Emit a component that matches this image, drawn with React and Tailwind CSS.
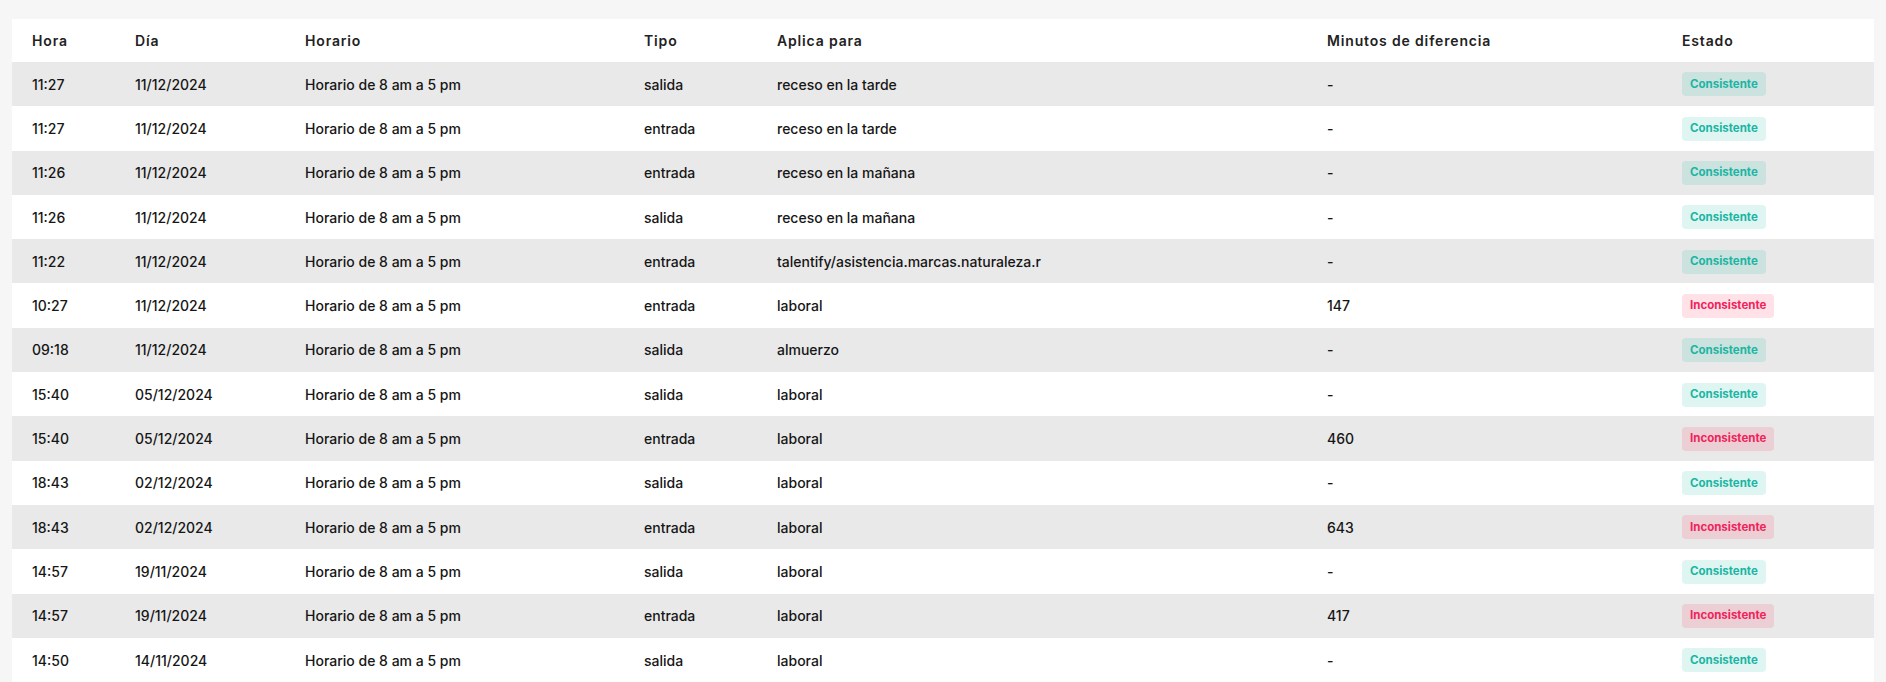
import React from "react";

const rows = [
  ["11:27", "11/12/2024", "salida", "receso en la tarde", "-", true],
  ["11:27", "11/12/2024", "entrada", "receso en la tarde", "-", true],
  ["11:26", "11/12/2024", "entrada", "receso en la mañana", "-", true],
  ["11:26", "11/12/2024", "salida", "receso en la mañana", "-", true],
  ["11:22", "11/12/2024", "entrada", "talentify/asistencia.marcas.naturaleza.r", "-", true],
  ["10:27", "11/12/2024", "entrada", "laboral", "147", false],
  ["09:18", "11/12/2024", "salida", "almuerzo", "-", true],
  ["15:40", "05/12/2024", "salida", "laboral", "-", true],
  ["15:40", "05/12/2024", "entrada", "laboral", "460", false],
  ["18:43", "02/12/2024", "salida", "laboral", "-", true],
  ["18:43", "02/12/2024", "entrada", "laboral", "643", false],
  ["14:57", "19/11/2024", "salida", "laboral", "-", true],
  ["14:57", "19/11/2024", "entrada", "laboral", "417", false],
  ["14:50", "14/11/2024", "salida", "laboral", "-", true],
];

function Estado({ ok }) {
  return ok ? (
    <span className="inline-flex h-[24px] items-center rounded-[4px] bg-[#14b8a6]/[0.14] px-[8px] text-[11.5px] font-bold text-[#1bb5a3]">
      Consistente
    </span>
  ) : (
    <span className="inline-flex h-[24px] items-center rounded-[4px] bg-[#ff2d5a]/[0.14] px-[8px] text-[11.5px] font-bold text-[#f0245a]">
      Inconsistente
    </span>
  );
}

export default function App() {
  return (
    <div
      className="min-h-screen bg-[#f6f6f6] pl-[12px] pr-[12px] pt-[19px]"
      style={{ fontFamily: "Inter, 'Liberation Sans', sans-serif" }}
    >
      <div className="bg-white">
        <table className="w-full table-fixed border-collapse text-left text-[14px] text-[#161616]">
          <colgroup>
            <col className="w-[103px]" />
            <col className="w-[170px]" />
            <col className="w-[339px]" />
            <col className="w-[133px]" />
            <col className="w-[550px]" />
            <col className="w-[355px]" />
            <col />
          </colgroup>
          <thead>
            <tr className="h-[43px]">
              {["Hora", "Día", "Horario", "Tipo", "Aplica para", "Minutos de diferencia", "Estado"].map((h) => (
                <th key={h} className="pl-[20px] font-semibold tracking-[0.06em] text-[#222]">
                  {h}
                </th>
              ))}
            </tr>
          </thead>
          <tbody>
            {rows.map((r, i) => (
              <tr key={i} className={i % 2 === 0 ? "h-[44.3px] bg-[#e9e9e9]" : "h-[44.3px] bg-white"}>
                <td className="pl-[20px] font-medium">{r[0]}</td>
                <td className="pl-[20px] font-medium">{r[1]}</td>
                <td className="pl-[20px] font-medium">Horario de 8 am a 5 pm</td>
                <td className="pl-[20px] font-medium">{r[2]}</td>
                <td className="pl-[20px] font-medium">{r[3]}</td>
                <td className="pl-[20px] font-medium">{r[4]}</td>
                <td className="pl-[20px]">
                  <Estado ok={r[5]} />
                </td>
              </tr>
            ))}
          </tbody>
        </table>
      </div>
    </div>
  );
}
